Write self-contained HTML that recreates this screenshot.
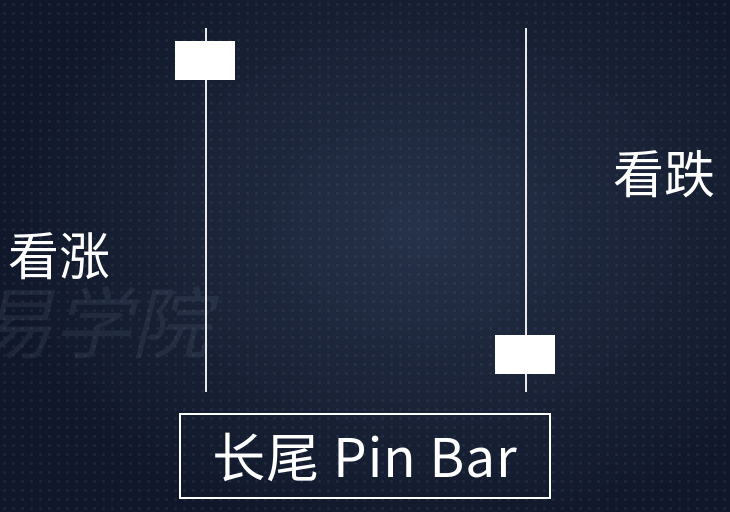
<!DOCTYPE html>
<html><head><meta charset="utf-8"><style>
html,body{margin:0;padding:0}
body{width:730px;height:512px;overflow:hidden;position:relative;
background:radial-gradient(ellipse 420px 320px at 420px 230px,#26324a 0%,#1b2438 50%,#10172a 100%);
font-family:"Noto Sans CJK SC","Liberation Sans",sans-serif;color:#fff}
.dots{position:absolute;inset:0;background-image:radial-gradient(circle,rgba(120,140,170,0.12) 1.3px,transparent 1.6px);background-size:9px 9px}
.l{position:absolute;width:1.5px;background:#e8e8e8}
.b{position:absolute;background:#fff}
.t{position:absolute;font-size:51px;line-height:1;font-weight:400}
.wm{position:absolute;left:-25px;top:280px;font-size:78px;line-height:1;color:rgba(160,175,200,0.10);font-style:italic}
.box{position:absolute;left:179px;top:413px;width:372px;height:86px;border:2px solid #fff;box-sizing:border-box;font-size:53px;letter-spacing:1px;text-align:center;line-height:80px;white-space:nowrap}
</style></head><body>
<div class="dots"></div>
<div class="wm">易学院</div>
<div class="l" style="left:205px;top:28px;height:364px"></div>
<div class="b" style="left:175px;top:41px;width:60px;height:39px"></div>
<div class="l" style="left:525px;top:28px;height:364px"></div>
<div class="b" style="left:495px;top:335px;width:60px;height:39px"></div>
<div class="t" style="left:8px;top:228px">看涨</div>
<div class="t" style="left:613px;top:146px">看跌</div>
<div class="box">长尾 Pin Bar</div>
</body></html>
